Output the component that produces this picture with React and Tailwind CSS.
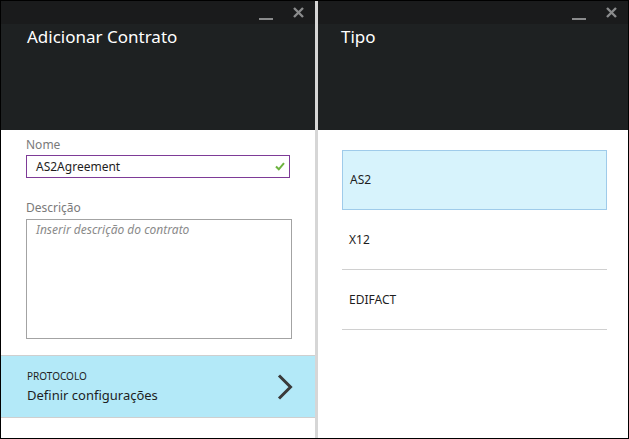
import React from 'react';

const font = { fontFamily: '"Noto Sans", "Open Sans", sans-serif' };

const TitleBar = () => (
  <div className="h-[23px] bg-[#1a1b1c] flex items-center justify-end pr-[11px] gap-[20px]">
    <div className="w-[14px] h-[2px] bg-[#8a8b8c] mt-[12px]" />
    <svg width="11" height="11" viewBox="0 0 11 11" className="mt-[-1px]">
      <path d="M1 1 L10 10 M10 1 L1 10" stroke="#8a8b8c" strokeWidth="2.4" />
    </svg>
  </div>
);

const Header = ({ title, className }) => (
  <div className={`h-[106px] bg-[#1e2122] pt-[1px] ${className}`}>
    <h1 className="text-[17px] text-white leading-[24px]">{title}</h1>
  </div>
);

const TypeRow = ({ label, selected }) => (
  <div
    className={`h-[60px] flex items-center px-[7px] text-[12px] text-[#1e1e1e] ${
      selected ? 'bg-[#d7f3fc] border border-[#9fcbea]' : 'border-b border-[#d0d0d0]'
    }`}
  >
    {label}
  </div>
);

export default function App() {
  return (
    <div className="w-[629px] h-[439px] border border-black flex bg-white overflow-hidden" style={font}>
      {/* Adicionar Contrato */}
      <div className="w-[314px] flex flex-col">
        <TitleBar />
        <Header title="Adicionar Contrato" className="pl-[26px]" />
        <div className="pt-[7px] flex-1">
          <div className="px-[25px]">
            <label className="block text-[12px] leading-[16px] text-[#7a7a7a]">Nome</label>
            <div className="mt-[2px] h-[23px] border border-[#7e3b97] flex items-center justify-between pl-[9px] pr-[4px]">
              <span className="text-[12px] text-[#1e1e1e]">AS2Agreement</span>
              <svg width="10" height="9" viewBox="0 0 10 9">
                <path d="M1 4.5 L3.8 7.3 L9 1.2" stroke="#6cb33e" strokeWidth="2" fill="none" />
              </svg>
            </div>
            <label className="block mt-[22px] text-[12px] leading-[16px] text-[#7a7a7a]">Descrição</label>
            <div className="mt-[3px] h-[120px] w-[266px] border border-[#a3a3a3] px-[9px] pt-[2px]">
              <span className="block text-[12px] leading-[16px] italic text-[#8a8a8a]">Inserir descrição do contrato</span>
            </div>
          </div>
          <div className="mt-[16px] h-[63px] border-t border-b border-[#cfcfcf] bg-[#b3e9f8] flex items-center justify-between pl-[26px] pr-[22px]">
            <div className="pt-[1px]">
              <div className="text-[10px] leading-[14px] text-[#1e1e1e]">PROTOCOLO</div>
              <div className="text-[13px] leading-[20px] text-[#1e1e1e] mt-[2px]">Definir configurações</div>
            </div>
            <svg width="16" height="26" viewBox="0 0 16 26">
              <path d="M2 1.5 L13.5 13 L2 24.5" stroke="#3a3a3a" strokeWidth="3" fill="none" />
            </svg>
          </div>
        </div>
      </div>

      <div className="w-[3px] bg-[#d6d6d6]" />

      {/* Tipo */}
      <div className="flex-1 flex flex-col">
        <TitleBar />
        <Header title="Tipo" className="pl-[23px]" />
        <div className="flex-1 pt-[20px] pl-[24px] pr-[21px]">
          <TypeRow label="AS2" selected />
          <TypeRow label="X12" />
          <TypeRow label="EDIFACT" />
        </div>
      </div>
    </div>
  );
}
